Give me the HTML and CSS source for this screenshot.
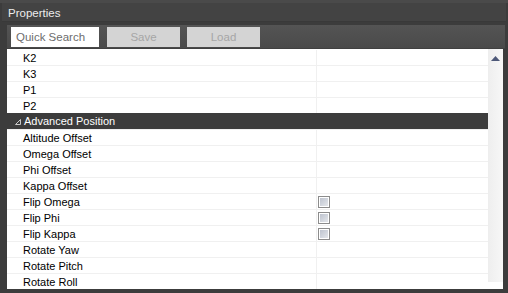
FILE: index.html
```html
<!DOCTYPE html>
<html>
<head>
<meta charset="utf-8">
<link rel="stylesheet" href="styles.css">
</head>
<body>
<div class="window">
  <div class="titlebar">Properties</div>
  <div class="toolbar">
    <div class="search">Quick Search</div>
    <div class="btn">Save</div>
    <div class="btn">Load</div>
  </div>
  <div class="grid">
    <div class="rows">
      <div class="row"><div class="name">K2</div><div class="value"></div></div>
      <div class="row"><div class="name">K3</div><div class="value"></div></div>
      <div class="row"><div class="name">P1</div><div class="value"></div></div>
      <div class="row"><div class="name">P2</div><div class="value"></div></div>
      <div class="category">
        <svg class="expander" width="6" height="6" viewBox="0 0 6 6"><polygon points="0.5,5.5 5.5,5.5 5.5,0.5" fill="none" stroke="#c8c8c8" stroke-width="1"/></svg>
        <span>Advanced Position</span>
      </div>
      <div class="row"><div class="name">Altitude Offset</div><div class="value"></div></div>
      <div class="row"><div class="name">Omega Offset</div><div class="value"></div></div>
      <div class="row"><div class="name">Phi Offset</div><div class="value"></div></div>
      <div class="row"><div class="name">Kappa Offset</div><div class="value"></div></div>
      <div class="row"><div class="name">Flip Omega</div><div class="value"><span class="check"></span></div></div>
      <div class="row"><div class="name">Flip Phi</div><div class="value"><span class="check"></span></div></div>
      <div class="row"><div class="name">Flip Kappa</div><div class="value"><span class="check"></span></div></div>
      <div class="row"><div class="name">Rotate Yaw</div><div class="value"></div></div>
      <div class="row"><div class="name">Rotate Pitch</div><div class="value"></div></div>
      <div class="row"><div class="name">Rotate Roll</div><div class="value"></div></div>
    </div>
    <div class="scrollcol">
      <div class="scrollbar">
        <svg class="arrow" width="9" height="5" viewBox="0 0 9 5"><polygon points="0,5 9,5 4.5,0" fill="#4d5878"/></svg>
      </div>
    </div>
  </div>
</div>
</body>
</html>
```
FILE: styles.css
```css
html, body {
  margin: 0;
  padding: 0;
}
body {
  width: 508px;
  height: 293px;
  overflow: hidden;
  background: #3c3c3c;
  font-family: "Liberation Sans", Arial, sans-serif;
  font-size: 11px;
}
.window {
  height: 293px;
  box-sizing: border-box;
  border-top: 3px solid #4a4a4a;
  display: flex;
  flex-direction: column;
}
.titlebar {
  height: 18px;
  line-height: 20px;
  margin: 0 2px 0 2px;
  padding-left: 6px;
  background: #434343;
  border-bottom: 1px solid #393939;
  color: #ececec;
  font-size: 11.5px;
}
.toolbar {
  margin: 3px 3px 0 7px;
  height: 24px;
  background: linear-gradient(#545454, #4a4a4a);
  border-bottom: 1px solid #404040;
  display: flex;
  align-items: flex-start;
  padding: 2px 0 0 4px;
  box-sizing: border-box;
  gap: 8px;
}
.search {
  width: 88px;
  height: 20px;
  box-sizing: border-box;
  background: #fff;
  color: #6d6d6d;
  line-height: 20px;
  padding-left: 5px;
  font-size: 11.5px;
}
.btn {
  width: 73px;
  height: 20px;
  background: #d4d4d4;
  color: #a6a6a6;
  line-height: 20px;
  text-align: center;
  font-size: 11.5px;
}
.btn + .btn {
  margin-left: -1px;
}
.grid {
  margin-left: 7px;
  width: 496px;
  height: 240px;
  background: #fff;
  display: flex;
}
.rows {
  width: 481px;
  display: flex;
  flex-direction: column;
}
.row {
  height: 15px;
  border-top: 1px solid #f0f0f0;
  display: flex;
  color: #000;
}
.row:first-child {
  border-top-color: #fff;
}
.name {
  width: 293px;
  padding-left: 16px;
  line-height: 16px;
  white-space: nowrap;
}
.value {
  flex: 1;
  border-left: 1px solid #f0f0f0;
  display: flex;
  align-items: center;
  padding-left: 1px;
}
.category {
  height: 16px;
  background: #3c3c3c;
  color: #fff;
  display: flex;
  align-items: center;
  line-height: 16px;
}
.expander {
  margin-left: 8px;
  margin-right: 2px;
  margin-top: 1px;
}
.category span {
  margin-left: 1px;
}
.check {
  width: 10px;
  height: 10px;
  border: 1px solid #8c8c8c;
  box-shadow: inset 0 0 0 1px #ffffff;
  background: linear-gradient(135deg, #b9bfcb, #e9ebef);
  margin-top: 1px;
}
.scrollcol {
  width: 15px;
}
.scrollbar {
  height: 233px;
  background: linear-gradient(90deg, #eeeeee, #f7f7f7);
  display: flex;
  justify-content: center;
}
.arrow {
  margin-top: 7px;
}
```
